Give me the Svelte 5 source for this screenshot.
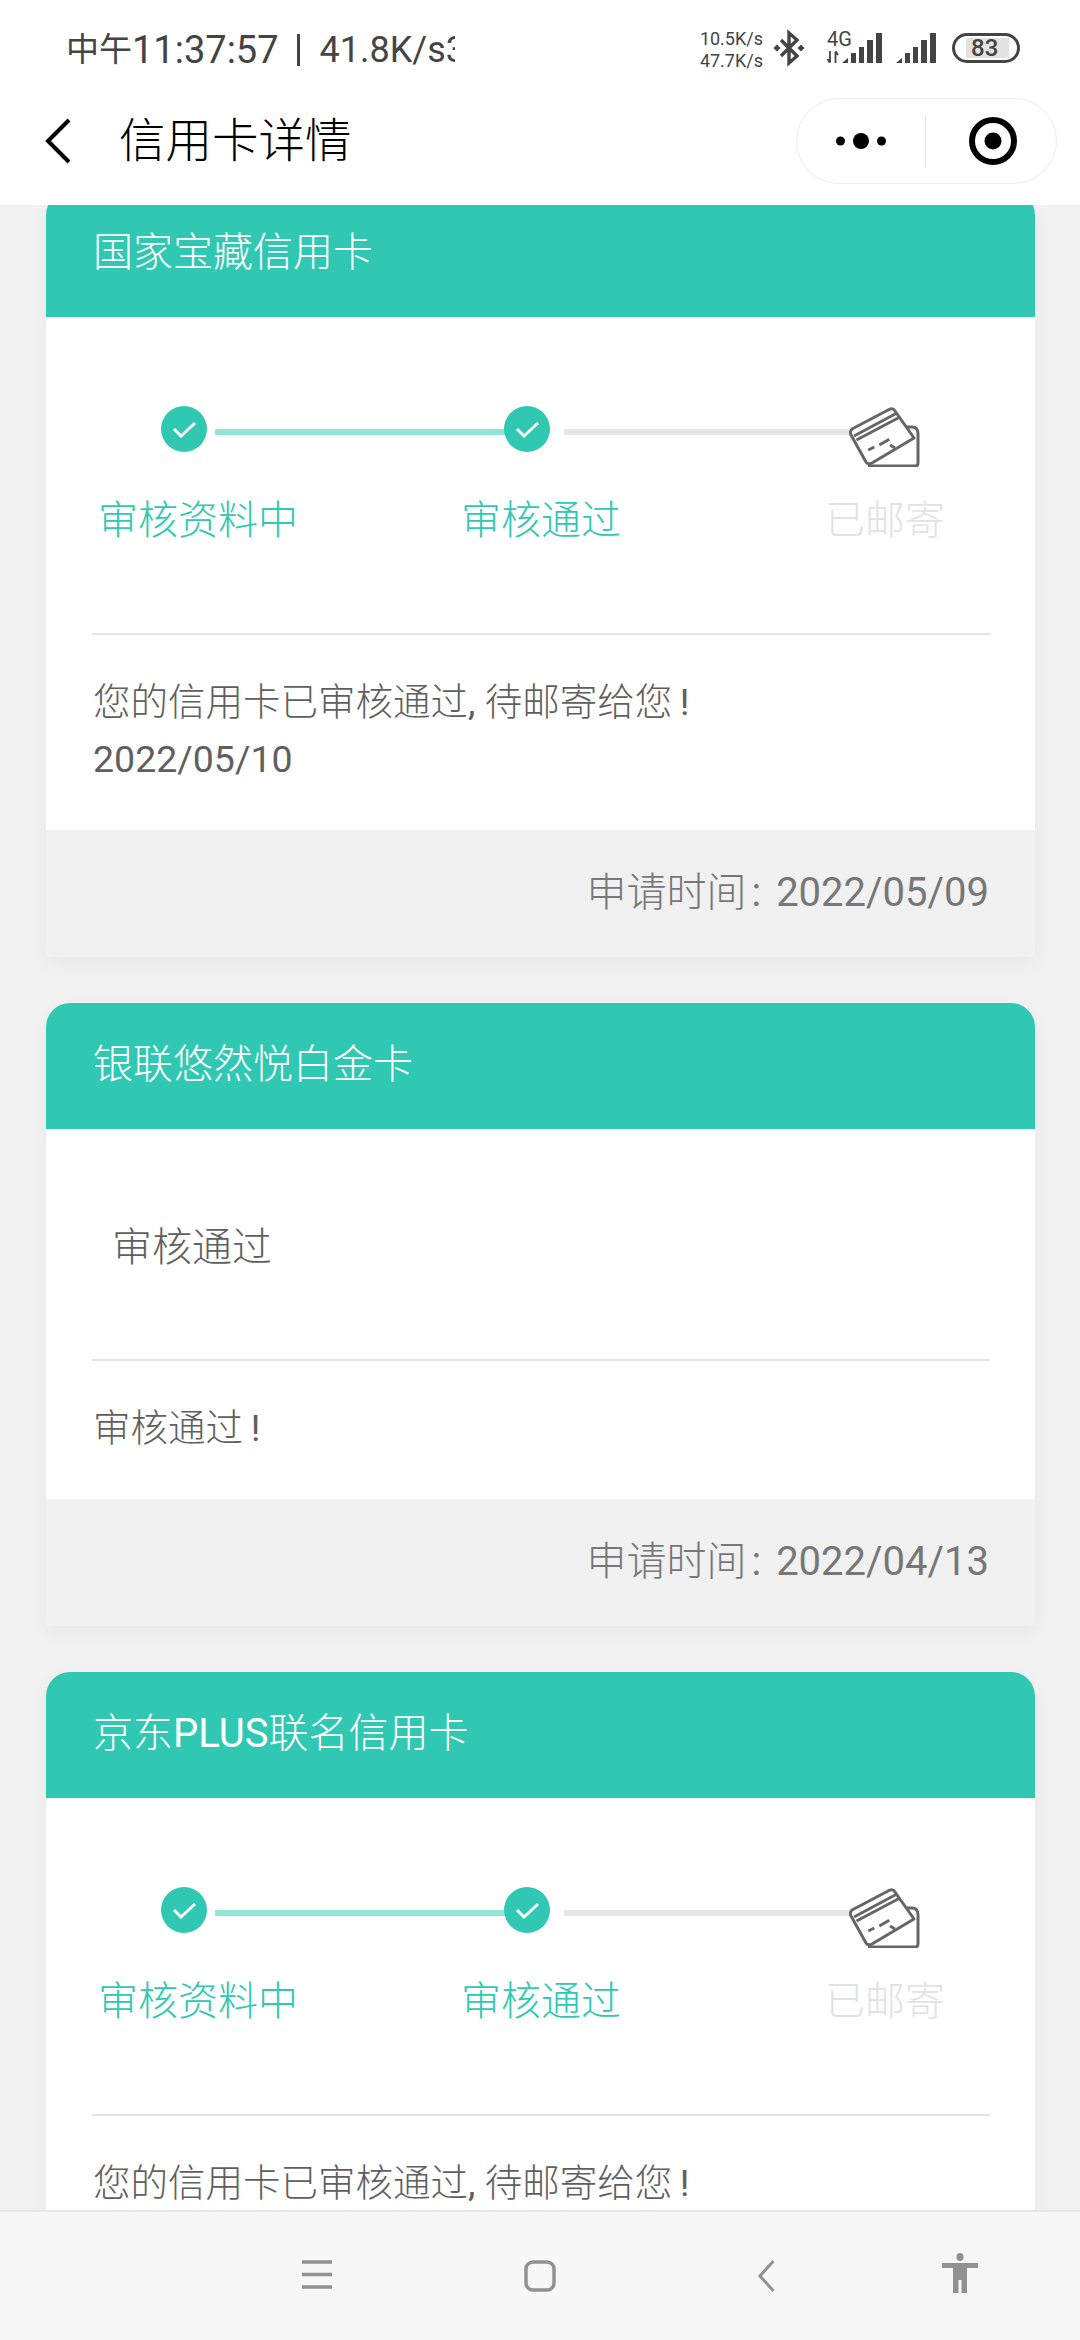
<script>
  const cards = [
    { title: '国家宝藏信用卡', steps: true, lines: ['您的信用卡已审核通过, 待邮寄给您\u2009!', '2022/05/10'], date: '2022/05/09' },
    { title: '银联悠然悦白金卡', steps: false, status: '审核通过', lines: ['审核通过\u2009!'], date: '2022/04/13' },
    { title: '京东PLUS联名信用卡', steps: true, lines: ['您的信用卡已审核通过, 待邮寄给您\u2009!', '2022/05/10'], date: '2022/05/09' }
  ];
  const bars = [
    'M0 30 L6 25 V30 Z',
    'M9 20 h5 v10 h-5 Z',
    'M17 14 h5 v16 h-5 Z',
    'M25 7 h6 v23 h-6 Z',
    'M34 0 h6 v30 h-6 Z'
  ];
  // Odd indexes hold the Latin runs, which are set a weight heavier than the CJK.
  const parts = (text) => text.split(/([A-Za-z0-9/,!\s]+)/).filter((p, i) => p || i % 2);
  const isLatin = (p) => /^[A-Za-z0-9/,!\s]+$/.test(p);
</script>

{#snippet rich(text)}
  {#each parts(text) as p}{#if isLatin(p)}<span class="latin">{p}</span>{:else}{p}{/if}{/each}
{/snippet}

{#snippet check()}
  <svg class="check" viewBox="0 0 46 46" aria-hidden="true">
    <circle cx="23" cy="23" r="23" fill="#30c8b3" />
    <path d="M13 23 L20 30 L34 17" fill="none" stroke="#fff" stroke-width="3" />
  </svg>
{/snippet}

{#snippet signal()}
  <svg class="signal" viewBox="0 0 40 30" aria-hidden="true">
    {#each bars as d}<path {d} fill="#444" />{/each}
  </svg>
{/snippet}

<div class="screen">
  <header class="top">
    <div class="status">
      <div class="clock">
        <span class="cn">中午</span><span>11:37:57</span><span class="pipe"></span><span class="speed">41.8K/s3</span>
      </div>
      <div class="speeds"><span>10.5K/s</span><span>47.7K/s</span></div>
      <svg class="bt" viewBox="0 0 30 34" aria-hidden="true">
        <path d="M7 9 L23 25 L15 32 V2 L23 9 L7 25" fill="none" stroke="#444" stroke-width="3.4" />
        <path d="M3 13.5 L6.5 17 L3 20.5 L-0.5 17 Z M27 13.5 L30.5 17 L27 20.5 L23.5 17 Z" fill="#444" />
      </svg>
      <div class="net">
        <span class="g4">4G</span>
        <svg class="arrows" viewBox="0 0 12 12" aria-hidden="true">
          <path d="M3 0 V11 M0.5 8 L3 12 M8.5 12 V1 M8.5 0 L11 4" fill="none" stroke="#444" stroke-width="1.8" />
        </svg>
      </div>
      {@render signal()}
      <span class="sig2">{@render signal()}</span>
      <div class="battery"><span class="level">83</span></div>
    </div>
    <nav class="nav">
      <svg class="back" viewBox="0 0 26 46" aria-hidden="true">
        <path d="M24 2 L3 23 L24 44" fill="none" stroke="#000" stroke-width="4" />
      </svg>
      <h1>信用卡详情</h1>
      <div class="capsule">
        <svg class="dots" viewBox="0 0 50 18" aria-hidden="true">
          <circle cx="4.5" cy="9" r="4.5" /><circle cx="25" cy="9" r="8" /><circle cx="45.5" cy="9" r="4.5" />
        </svg>
        <span class="sep"></span>
        <svg class="target" viewBox="0 0 48 48" aria-hidden="true">
          <circle cx="24" cy="24" r="21" fill="none" stroke="#000" stroke-width="6" />
          <circle cx="24" cy="24" r="8.5" />
        </svg>
      </div>
    </nav>
  </header>

  <main class="scroll">
    <div class="list">
      {#each cards as c}
        <section class="card">
          <h2>{@render rich(c.title)}</h2>
          {#if c.steps}
            <div class="steps">
              <div class="track">
                {@render check()}
                <span class="line on"></span>
                {@render check()}
                <span class="line"></span>
                <svg class="mail" viewBox="0 0 72 60" aria-hidden="true">
                  <g fill="none" stroke="#666" stroke-width="3" stroke-linejoin="round">
                    <path d="M52 20 H63 Q69 20 69 27 V56 Q69 59 66 59 H19" />
                    <path d="M3 22 L40 2.5 Q44 0.5 46 4 L65 31 L23 56 Q19 58 17 55 L1.5 27 Q1 24 3 22 Z" fill="#fff" />
                    <path d="M5 29 L48 6 M7.500 33 L51 10" />
                    <path d="M19.300 43 L25.300 40 M30.300 38 L40.300 32.300" />
                    <path d="M41 38 L46 41" />
                  </g>
                </svg>
              </div>
              <div class="labels">
                <span class="l1">审核资料中</span>
                <span class="l2">审核通过</span>
                <span class="l3">已邮寄</span>
              </div>
            </div>
          {:else}
            <div class="plain">{c.status}</div>
          {/if}
          <div class="msg">
            {#each c.lines as l}<p>{@render rich(l)}</p>{/each}
          </div>
          <footer>申请时间<span class="latin colon">:</span><span class="latin">{c.date}</span></footer>
        </section>
      {/each}
    </div>
  </main>

  <div class="bottom">
    <svg class="b-menu" viewBox="0 0 30 30" aria-hidden="true">
      <path d="M0 2 H30 M0 14.500 H30 M0 27 H30" stroke="#919191" stroke-width="3.4" />
    </svg>
    <svg class="b-home" viewBox="0 0 32 32" aria-hidden="true">
      <rect x="2" y="2" width="28" height="28" rx="7" fill="none" stroke="#919191" stroke-width="3.4" />
    </svg>
    <svg class="b-back" viewBox="0 0 17 32" aria-hidden="true">
      <path d="M15.500 1 L2 16 L15.500 31" fill="none" stroke="#919191" stroke-width="3" />
    </svg>
    <svg class="b-person" viewBox="0 0 36 40" aria-hidden="true">
      <ellipse cx="18" cy="4" rx="3.500" ry="4" fill="#919191" />
      <path d="M0 10 H36 V15 H25 V40 H19.500 V27 H16.500 V40 H11 V15 H0 Z" fill="#919191" />
    </svg>
  </div>
</div>

<style>
  :global(body) {
    margin: 0;
    background: #f2f2f2;
  }
  * { box-sizing: border-box; }
  .screen {
    width: 1080px;
    height: 2340px;
    display: flex;
    flex-direction: column;
    overflow: hidden;
    font-family: Roboto, "Noto Sans CJK SC", sans-serif;
    font-weight: 300;
    background: #f2f2f2;
  }
  .latin { font-weight: 400; }
  .colon { margin: 0 15px 0 5px; }
  .top {
    height: 205px;
    flex: none;
    background: #fff;
    position: relative;
    z-index: 1;
  }
  .status {
    height: 87px;
    display: flex;
    align-items: flex-start;
    padding: 31px 0 0 66px;
    color: #444;
    font-weight: 400;
  }
  .clock {
    width: 389px;
    height: 40px;
    overflow: hidden;
    display: flex;
    align-items: center;
    font-size: 38px;
    line-height: 40px;
    white-space: nowrap;
    margin-top: -1px;
  }
  .cn { font-size: 33px; }
  .pipe {
    width: 3px;
    height: 32px;
    background: #444;
    margin: 0 20px 0 18px;
    flex: none;
  }
  .speed { font-size: 36px; }
  .speeds {
    width: 111px;
    margin-left: 197px;
    margin-top: -3px;
    display: flex;
    flex-direction: column;
    align-items: flex-end;
    font-size: 18px;
    line-height: 22px;
  }
  .bt { width: 30px; height: 34px; margin-left: 11px; overflow: visible; }
  .net {
    width: 25px;
    margin-left: 23px;
    display: flex;
    flex-direction: column;
    font-size: 20px;
    line-height: 14px;
    margin-top: 1px;
  }
  .g4 { height: 19px; }
  .arrows { width: 12px; height: 12px; display: block; }
  .signal { width: 40px; height: 30px; flex: none; display: block; margin-left: -10px; margin-top: 2px; }
  .sig2 { margin-left: 24px; }
  .battery {
    width: 68px;
    height: 30px;
    margin-left: 16px;
    margin-top: 2px;
    border: 3.500px solid #444;
    border-radius: 15px;
    padding: 2px 8px 2px 11px;
    display: flex;
  }
  .level {
    flex: 1;
    background: #e2e2e2;
    font-size: 24px;
    line-height: 20px;
    font-weight: 500;
    padding-left: 5px;
    color: #444;
  }
  .nav {
    height: 108px;
    display: flex;
    align-items: center;
    padding-left: 45px;
  }
  .back { width: 26px; height: 46px; }
  h1 {
    margin: 0 0 0 48px;
    font-size: 46.500px;
    font-weight: 300;
    color: #000;
    line-height: 60px;
  }
  .capsule {
    margin-left: auto;
    margin-right: 23px;
    width: 261px;
    height: 86px;
    border: 1px solid #ececec;
    border-radius: 43px;
    display: flex;
    align-items: center;
    padding-left: 39px;
  }
  .dots { width: 50px; height: 18px; }
  .sep { width: 1px; height: 53px; background: #e6e6e6; margin-left: 39px; }
  .target { width: 48px; height: 48px; margin-left: 43px; }

  .scroll {
    flex: 1;
    min-height: 0;
    overflow: hidden;
  }
  .list {
    margin-top: -14px;
    padding: 0 45px 0 46px;
    display: flex;
    flex-direction: column;
    gap: 46px;
  }
  .card {
    background: #fff;
    border-radius: 24px 24px 0 0;
    box-shadow: 0 6px 20px rgba(0, 0, 0, 0.05);
    overflow: hidden;
  }
  h2 {
    margin: 0;
    height: 126px;
    background: #30c8b3;
    color: #fff;
    font-size: 40px;
    font-weight: 300;
    line-height: 124px;
    padding-left: 47px;
  }
  .steps {
    padding-top: 89px;
    height: 318px;
    margin: 0 45px 0 46px;
    border-bottom: 2px solid #e4e4e4;
  }
  .track {
    display: flex;
    align-items: flex-start;
    margin-left: 69px;
  }
  .check { width: 46px; height: 46px; flex: none; }
  .line {
    height: 6px;
    margin-top: 23px;
    background: #e6e6e6;
    flex: none;
    width: 286px;
    margin-left: 14px;
    margin-right: -2px;
  }
  .line.on {
    width: 290px;
    background: #92e6d7;
    margin-left: 8px;
    margin-right: -1px;
  }
  .mail { width: 72px; height: 60px; flex: none; margin-top: 1px; margin-left: 1px; }
  .labels {
    margin-top: 26px;
    display: flex;
    font-size: 40px;
    line-height: 56px;
    color: #30c8b3;
    white-space: nowrap;
  }
  .l1 { margin-left: 6px; width: 363px; }
  .l2 { width: 364px; }
  .l3 { color: #e2e2e2; }
  .plain {
    height: 232px;
    margin: 0 45px 0 46px;
    padding: 91px 0 0 20px;
    font-size: 40px;
    line-height: 56px;
    color: #5f5f5f;
    border-bottom: 2px solid #e4e4e4;
  }
  .msg {
    padding: 39px 48px 42px 47px;
    font-size: 37.500px;
    line-height: 57px;
    color: #5f5f5f;
  }
  p { margin: 0; }
  footer {
    height: 127px;
    background: #f1f1f1;
    color: #777;
    font-size: 40px;
    line-height: 126px;
    text-align: right;
    padding-right: 46px;
  }
  .bottom {
    height: 130px;
    flex: none;
    background: #f7f7f7;
    border-top: 2px solid #e6e6e6;
    position: relative;
    z-index: 1;
    display: flex;
    align-items: flex-start;
    padding: 48px 0 0 302px;
  }
  .b-menu { width: 30px; height: 30px; }
  .b-home { width: 32px; height: 32px; margin-left: 192px; }
  .b-back { width: 17px; height: 32px; margin-left: 202px; }
  .b-person { width: 36px; height: 40px; margin-left: 167px; margin-top: -7px; }
</style>
